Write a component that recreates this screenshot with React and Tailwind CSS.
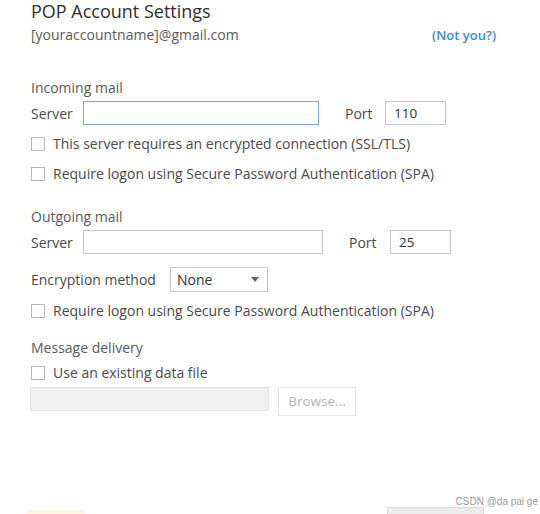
function Checkbox({ label, className = '' }) {
  return (
    <label className={`flex items-center gap-[8px] ${className}`}>
      <span className="h-[14px] w-[14px] shrink-0 border border-[#b8b8b8] bg-white" />
      <span>{label}</span>
    </label>
  )
}

function Box({ className = '', children }) {
  return (
    <div className={`flex h-[24px] items-center border px-[8px] text-[13.5px] text-[#333] ${className}`}>
      {children}
    </div>
  )
}

export default function App() {
  return (
    <div
      className="relative h-[514px] w-[540px] overflow-hidden bg-white pl-[31px] text-[14px] text-[#4a4a4a]"
      style={{ fontFamily: '"Open Sans", "Noto Sans", sans-serif' }}
    >
      <h1 className="pt-[1px] text-[18px] leading-[20px] text-[#2f2f2f]">POP Account Settings</h1>
      <div className="mt-[4px] flex w-[465px] items-center justify-between leading-[20px]">
        <span className="text-[14px] text-[#5a5a5a]">[youraccountname]@gmail.com</span>
        <span className="text-[13px] font-semibold text-[#3d8ac9]">(Not you?)</span>
      </div>

      {/* Incoming */}
      <p className="mt-[33px] leading-[20px] text-[#5a5a5a]">Incoming mail</p>
      <div className="mt-[3px] flex items-center">
        <span className="w-[52px]">Server</span>
        <Box className="w-[236px] border-[#7ea8d6]" />
        <span className="ml-[26px] w-[40px]">Port</span>
        <Box className="w-[61px] border-[#c4c4c4]">110</Box>
      </div>
      <Checkbox className="mt-[8px] leading-[22px]" label="This server requires an encrypted connection (SSL/TLS)" />
      <Checkbox className="mt-[8px] leading-[22px]" label="Require logon using Secure Password Authentication (SPA)" />

      {/* Outgoing */}
      <p className="mt-[22px] leading-[20px] text-[#5a5a5a]">Outgoing mail</p>
      <div className="mt-[3px] flex items-center">
        <span className="w-[52px]">Server</span>
        <Box className="w-[240px] border-[#c4c4c4]" />
        <span className="ml-[26px] w-[41px]">Port</span>
        <Box className="w-[61px] border-[#c4c4c4]">25</Box>
      </div>
      <div className="mt-[13px] flex items-center">
        <span className="w-[139px]">Encryption method</span>
        <div className="flex h-[25px] w-[98px] items-center justify-between border border-[#c4c4c4] pl-[6px] pr-[8px] text-[#333]">
          <span>None</span>
          <svg width="8" height="5" viewBox="0 0 8 5">
            <path d="M0 0h8L4 5z" fill="#666" />
          </svg>
        </div>
      </div>
      <Checkbox className="mt-[8px] leading-[22px]" label="Require logon using Secure Password Authentication (SPA)" />

      {/* Delivery */}
      <p className="mt-[16px] leading-[20px] text-[#5a5a5a]">Message delivery</p>
      <Checkbox className="mt-[4px] leading-[22px]" label="Use an existing data file" />
      <div className="mt-[3px] flex items-start">
        <div className="-ml-[1px] h-[24px] w-[239px] border border-[#e2e2e2] bg-[#f0f0f0]" />
        <div className="ml-[9px] flex h-[29px] w-[78px] items-center justify-center border border-[#e4e4e4] text-[13.5px] text-[#b3b3b3]">
          Browse...
        </div>
      </div>

      {/* bottom cut-off bits */}
      <div className="absolute bottom-0 left-[27px] h-[4px] w-[58px] bg-[#fbf7e4]" />
      <div className="absolute bottom-0 left-[387px] h-[7px] w-[97px] border border-b-0 border-[#d8d8d8] bg-[#ececec]" />
      <span
        className="absolute right-[2px] bottom-[5px] text-[10px] text-[#9a9a9a]"
        style={{ fontFamily: '"Liberation Sans", sans-serif' }}
      >
        CSDN @da pai ge
      </span>
    </div>
  )
}
